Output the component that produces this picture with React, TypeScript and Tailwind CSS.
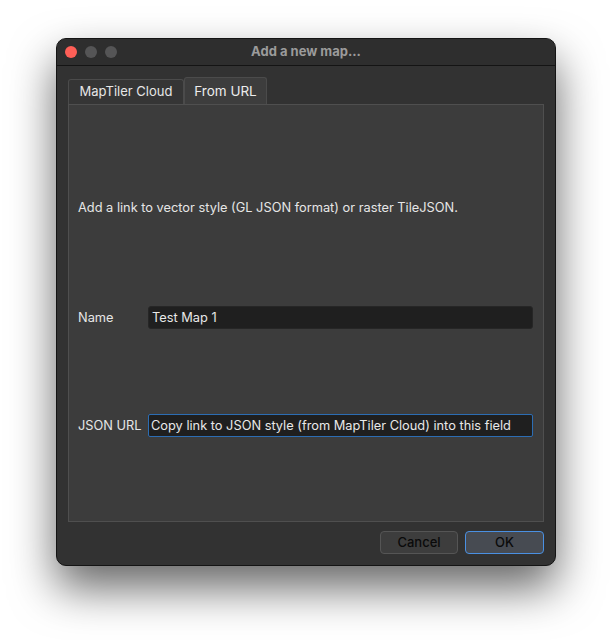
import React from "react";

const font = { fontFamily: 'Inter, "Liberation Sans", Arial, sans-serif' };

function TrafficLights() {
  return (
    <div className="flex items-center gap-[8px]">
      <span className="w-[12px] h-[12px] rounded-full bg-[#fe5f57]" />
      <span className="w-[12px] h-[12px] rounded-full bg-[#555556]" />
      <span className="w-[12px] h-[12px] rounded-full bg-[#555556]" />
    </div>
  );
}

function Field({ label, value, focused }: { label: string; value: string; focused?: boolean }) {
  return (
    <div className="flex items-center">
      <span className="w-[70px] text-[12.8px] text-[#e6e6e6]">{label}</span>
      <div
        className={
          focused
            ? "flex-1 h-[23px] flex items-center px-[2px] bg-[#1f1f1f] border border-[#2c6db3] rounded-[2px] text-[12.8px] text-[#e8e8e8]"
            : "flex-1 h-[23px] flex items-center px-[3px] bg-[#1f1f1f] border border-[#262626] rounded-[3px] text-[12.8px] text-[#e8e8e8]"
        }
      >
        {value}
      </div>
    </div>
  );
}

export default function App() {
  return (
    <div className="w-[612px] h-[640px] bg-white pt-[38px] pl-[56px]" style={font}>
      <div className="w-[500px] h-[528px] flex flex-col rounded-[10px] bg-[#323232] border border-[#141414] shadow-[0_22px_45px_rgba(0,0,0,0.6)] overflow-hidden">
        {/* title bar */}
        <div className="relative h-[27px] flex items-center px-[8px] bg-[#2e2e2e] border-b border-[#141414]">
          <TrafficLights />
          <div className="absolute inset-0 flex items-center justify-center text-[13px] font-bold text-[#9b9b9b]">
            Add a new map...
          </div>
        </div>

        <div className="flex-1 flex flex-col px-[11px] pt-[11px]">
          {/* tabs */}
          <div className="flex items-end h-[27px]">
            <div className="h-[25px] w-[116px] flex items-center justify-center bg-[#353535] border border-[#4b4b4b] border-b-0 rounded-t-[3px] text-[13px] text-[#e6e6e6]">
              MapTiler Cloud
            </div>
            <div className="h-[27px] w-[83px] flex items-center justify-center bg-[#3d3d3d] border border-[#4b4b4b] border-b-0 rounded-t-[3px] text-[13.5px] text-[#ececec]">
              From URL
            </div>
          </div>

          {/* panel */}
          <div className="h-[418px] w-[476px] flex flex-col bg-[#3c3c3c] border border-[#4f4f4f] pl-[9px] pr-[10px] pt-[95px]">
            <p className="text-[12.8px] text-[#e6e6e6] leading-[16px]">
              Add a link to vector style (GL JSON format) or raster TileJSON.
            </p>
            <div className="mt-[90px]">
              <Field label="Name" value="Test Map 1" />
            </div>
            <div className="mt-[85px]">
              <Field label="JSON URL" value="Copy link to JSON style (from MapTiler Cloud) into this field" focused />
            </div>
          </div>

          {/* buttons */}
          <div className="flex justify-end gap-[7px] mt-[9px]">
            <button className="w-[78px] h-[23px] rounded-[4px] bg-[#3d3d3d] border border-[#555555] text-[13px] font-medium text-[#0a0a0a]">
              Cancel
            </button>
            <button className="w-[79px] h-[23px] rounded-[4px] bg-[#474b52] border border-[#4a90e2] text-[13px] font-medium text-[#0a0a0a]">
              OK
            </button>
          </div>
        </div>
      </div>
    </div>
  );
}
